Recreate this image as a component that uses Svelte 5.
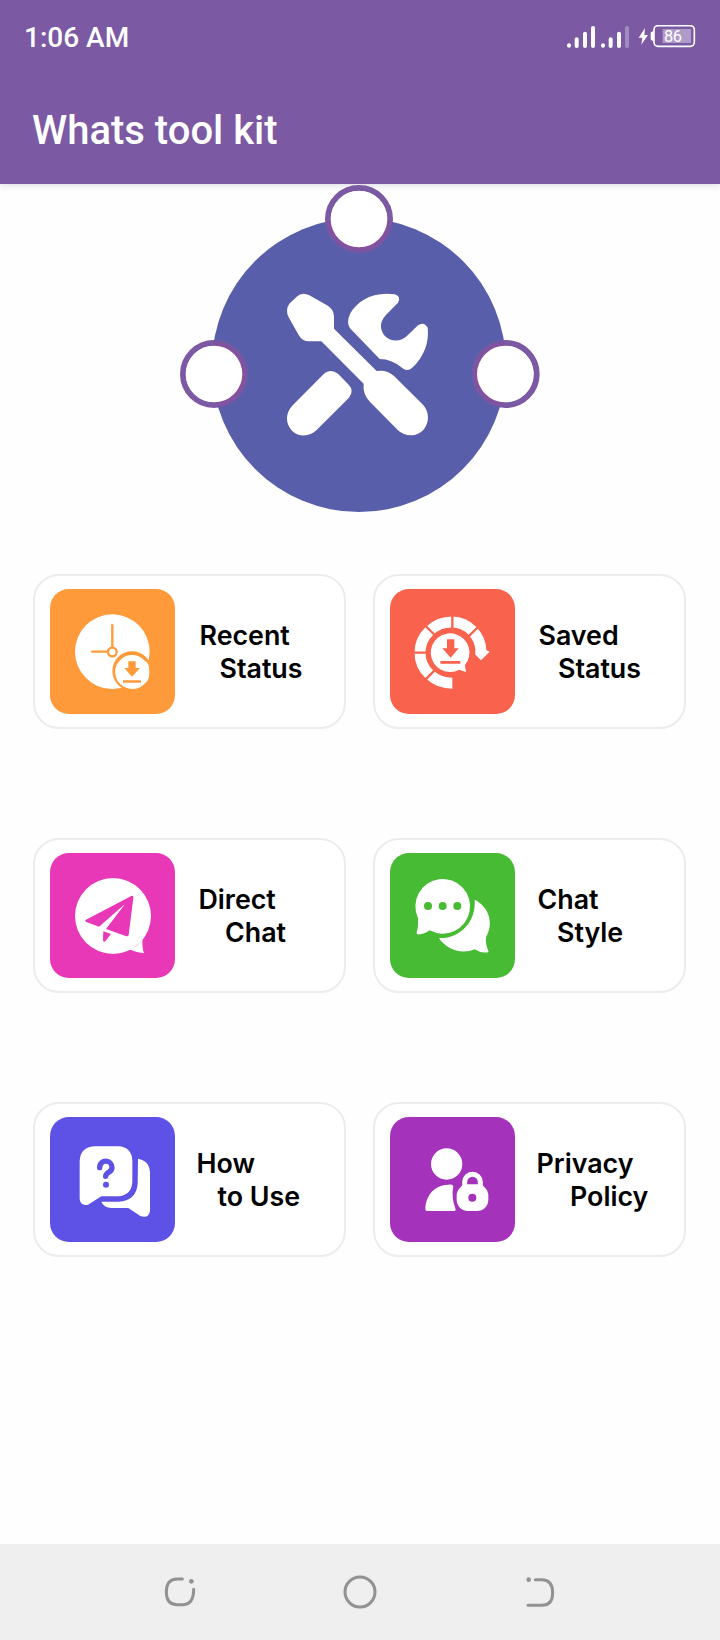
<script>
  const tools = [
    { id: 'recent', first: 'Recent', second: 'Status', color: '#ff9a3a', start: 25, indent: 20 },
    { id: 'saved', first: 'Saved', second: 'Status', color: '#f9624c', start: 24, indent: 19.5 },
    { id: 'direct', first: 'Direct', second: 'Chat', color: '#e838b8', start: 24, indent: 26.5 },
    { id: 'style', first: 'Chat', second: 'Style', color: '#48bb35', start: 23, indent: 19.5 },
    { id: 'help', first: 'How', second: 'to Use', color: '#5d52e5', start: 22, indent: 21 },
    { id: 'privacy', first: 'Privacy', second: 'Policy', color: '#a532ba', start: 22, indent: 33.5 }
  ];
</script>

<div class="screen">
  <header>
    <div class="status-bar">
      <span class="time">1:06 AM</span>
      <svg class="status-icons" viewBox="78 45 390 69">
        <g fill="none" stroke="#fff" stroke-width="12" stroke-linecap="round">
          <path d="M87 106v1M110 88v20M135 71v37M159 54v54M189 106v1M212 88v20M237 71v37" />
          <path d="M261 54v54" opacity=".3" />
        </g>
        <path d="M315 54l-19 29h11l-3 21 20-29h-11z" fill="#fff" />
        <path d="M341 64q-9 0-9 7v14q0 8 9 8z" fill="#fff" />
        <rect x="368" y="57" width="85" height="42" fill="#fff" opacity=".4" />
        <rect x="342" y="47" width="121" height="62" rx="12" fill="none" stroke="#fff" stroke-width="5" />
        <text x="372" y="95" font-size="49" fill="#fff" textLength="54">86</text>
      </svg>
    </div>
    <h1>Whats tool kit</h1>
  </header>

  <main>
    <svg class="hero" viewBox="0 27 1140 1008">
      <defs>
        <radialGradient id="halo">
          <stop offset="0.8" stop-color="#884e9e" />
          <stop offset="0.92" stop-color="#7d55a0" />
          <stop offset="1" stop-color="#6a5ca6" stop-opacity=".3" />
        </radialGradient>
        <clipPath id="disc"><circle cx="567" cy="570" r="441" /></clipPath>
      </defs>
      <g fill="#fff" stroke="#7b59a3" stroke-width="18">
        <circle cx="567" cy="132" r="93" />
        <circle cx="132" cy="597" r="93" />
        <circle cx="1007" cy="597" r="93" />
      </g>
      <circle cx="567" cy="570" r="441" fill="#585eaa" />
      <g clip-path="url(#disc)" fill="url(#halo)">
        <circle cx="567" cy="132" r="105" />
        <circle cx="132" cy="597" r="105" />
        <circle cx="1007" cy="597" r="105" />
      </g>
      <g fill="#fff">
        <circle cx="567" cy="132" r="85" />
        <circle cx="132" cy="597" r="85" />
        <circle cx="1006" cy="597" r="85" />
        <!-- screwdriver -->
        <path d="M358 386L380 365Q397 350 418 361L471 391Q492 403 492 425V461L620 588Q650 583 672 603L759 689C791 725 768 781 723 781Q700 781 684 766L601 682Q577 657 581 626L454 499H416Q397 499 386 480L356 427Q345 404 358 386Z" />
        <!-- wrench head -->
        <path d="M541 415C563 378 608 349 674 358Q694 363 684 383L647 421C628 443 630 462 642 480C661 502 693 502 713 481L744 451Q762 439 773 458C778 501 763 545 726 579Q713 590 700 581Q666 552 629 552L540 460Q528 443 541 415Z" />
        <!-- wrench handle -->
        <path d="M459 599Q480 578 504 596L536 629Q553 646 537 668L440 765C421 784 389 789 366 767C346 745 346 716 366 693Z" />
      </g>
    </svg>

    <div class="tools">
      {#each tools as tool}
        <div class="card">
          <div class="tile" style="background: {tool.color}; color: {tool.color};">
            {#if tool.id === 'recent'}
              <svg viewBox="74 71 375 375">
                <circle cx="261" cy="259" r="112" fill="#fff" />
                <path d="M261 177v70M198 259h50" class="line" stroke-width="7" />
                <circle cx="261" cy="260" r="13" class="line" stroke-width="7" />
                <circle cx="320" cy="317" r="59" fill="currentColor" />
                <path d="M320 371a51 51 0 1 1 40-83q12 4 12 33 0 25-12 32-16 18-40 18z" fill="#fff" />
                <path d="M309 288h22v20h13l-24 26-23-26h12zM293 345h54v7h-54z" fill="currentColor" />
              </svg>
            {:else if tool.id === 'saved'}
              <svg viewBox="74 71 375 375">
                <path d="M261 354A97 92 0 0 1 164 262A97 92 0 0 1 261 170A88 90 0 0 1 347 258" fill="none" stroke="#fff" stroke-width="33" />
                <path d="M261 262V140M261 262H140M261 262L175 176M261 262L347 176M261 262L175 348" class="line" stroke-width="7" />
                <path d="M321 258l11-3h31l10 4-26 26q-13-12-26-27z" fill="#fff" />
                <circle cx="256" cy="261" r="74" fill="currentColor" />
                <path d="M299 319l-17-6a58 58 0 1 1 17-14q-1 10 4 19z" fill="#fff" />
                <path d="M245 222h22v27h13l-24 28-25-28h14zM225 287h60v8h-60z" fill="currentColor" />
              </svg>
            {:else if tool.id === 'direct'}
              <svg viewBox="74 69 375 375">
                <circle cx="263" cy="258" r="114" fill="#fff" />
                <path d="M310 358q31-8 42-34-3 25 4 46-22-2-46-12z" fill="#fff" />
                <path d="M182 269L318 198Q325 196 324 204L310 315Q308 321 301 318L242 297L299 222L221 290L183 276Q177 272 182 269Z" fill="currentColor" />
                <path d="M234 304l23 8-17 22q-6 4-7-3z" fill="currentColor" />
              </svg>
            {:else if tool.id === 'style'}
              <svg viewBox="74 69 375 375">
                <path d="M328 209C370 229 386 279 363 319Q358 338 370 366Q350 372 328 358C286 375 242 357 221 324C281 327 333 278 328 209Z" fill="#fff" />
                <path d="M157 313Q153 311 154 307Q160 289 158 264A82 82 0 1 1 193 301Q174 315 157 313Z" fill="#fff" />
                <g fill="currentColor">
                  <circle cx="188" cy="228" r="12" />
                  <circle cx="232" cy="228" r="12" />
                  <circle cx="276" cy="228" r="12" />
                </g>
              </svg>
            {:else if tool.id === 'help'}
              <svg viewBox="74 69 375 375">
                <path d="M338 194Q373 200 374 237V350Q371 374 345 366L309 342H258Q235 340 228 323H280Q332 321 337 270Z" fill="#fff" />
                <path d="M206 157H279Q319 159 321 200V264Q319 304 278 307H228L188 332Q166 337 163 315V200Q166 160 206 157Z" fill="#fff" />
                <path d="M223 221C223 194 261 196 260 222C259 236 242 234 241 247" class="line" stroke-width="16" stroke-linecap="round" />
                <circle cx="242" cy="272" r="9" fill="currentColor" />
              </svg>
            {:else}
              <svg viewBox="74 69 375 375">
                <circle cx="244" cy="210" r="47" fill="#fff" />
                <path d="M264 276Q257 311 271 346Q272 351 267 351H185Q180 351 180 346C181 303 208 273 249 272Q262 271 264 276Z" fill="#fff" />
                <path d="M298 286V264a23 23 0 0 1 47 0V286" fill="none" stroke="#fff" stroke-width="15" />
                <rect x="274" y="271" width="95" height="80" rx="34" fill="#fff" />
                <circle cx="321" cy="311" r="12" fill="currentColor" />
              </svg>
            {/if}
          </div>
          <div class="label" style="padding-left: {tool.start}px;">
            <div>{tool.first}</div>
            <div style="padding-left: {tool.indent}px;">{tool.second}</div>
          </div>
        </div>
      {/each}
    </div>
  </main>

  <nav>
    <svg viewBox="66 117 108 108">
      <path d="M127 132H111Q79 133 79 171Q79 209 111 209H130Q161 208 161 163" />
      <circle cx="154" cy="139" r="7" />
    </svg>
    <svg viewBox="606 117 108 108">
      <circle class="home" cx="660" cy="171" r="45" />
    </svg>
    <svg viewBox="1146 117 108 108">
      <path d="M1186 134H1206Q1238 135 1238 173Q1238 210 1206 211H1164" />
      <circle cx="1166" cy="134" r="7" />
    </svg>
  </nav>
</div>

<style>
  :global(body) {
    margin: 0;
    background: #fff;
  }

  .screen {
    display: flex;
    flex-direction: column;
    width: 720px;
    height: 1640px;
    overflow: hidden;
    background: #fefefe;
    font-family: Roboto, sans-serif;
  }

  header {
    flex: none;
    box-sizing: border-box;
    height: 184px;
    background: #7b59a3;
    color: #fff;
    box-shadow: 0 1px 7px rgba(70, 50, 110, 0.2);
  }

  .status-bar {
    display: flex;
    align-items: center;
    justify-content: space-between;
    height: 75px;
    padding: 0 24px 0 24px;
  }

  .time {
    font-size: 28px;
    font-weight: 500;
  }

  .status-icons {
    width: 130px;
    height: 23px;
    margin-bottom: 2px;
  }

  h1 {
    margin: 0;
    padding-left: 32px;
    font-size: 40px;
    line-height: 111px;
    font-weight: 500;
  }

  main {
    flex: 1;
  }

  .hero {
    display: block;
    width: 380px;
    height: 336px;
    margin-left: 170px;
  }

  .tools {
    display: grid;
    grid-template-columns: 313px 313px;
    gap: 110px 27px;
    padding: 54px 0 0 33px;
  }

  .card {
    display: flex;
    align-items: center;
    box-sizing: border-box;
    height: 155px;
    margin-bottom: -1px;
    padding-left: 14.5px;
    border: 2px solid #ececec;
    border-radius: 26px;
    background: #fff;
  }

  .tile {
    flex: none;
    width: 125px;
    height: 125px;
    border-radius: 19px;
  }

  .tile svg {
    display: block;
    width: 100%;
    height: 100%;
  }

  .line {
    fill: none;
    stroke: currentColor;
  }

  .label {
    padding-top: 1px;
    color: #000;
    font-family: Inter, sans-serif;
    font-size: 26.8px;
    font-weight: 600;
    line-height: 33px;
    white-space: nowrap;
  }

  nav {
    flex: none;
    display: flex;
    align-items: center;
    gap: 144px;
    height: 96px;
    padding-left: 162px;
    background: #efefef;
  }

  nav svg {
    width: 36px;
    height: 36px;
    fill: #929292;
  }

  nav path,
  nav .home {
    fill: none;
    stroke: #929292;
    stroke-width: 9;
    stroke-linecap: round;
  }
</style>
